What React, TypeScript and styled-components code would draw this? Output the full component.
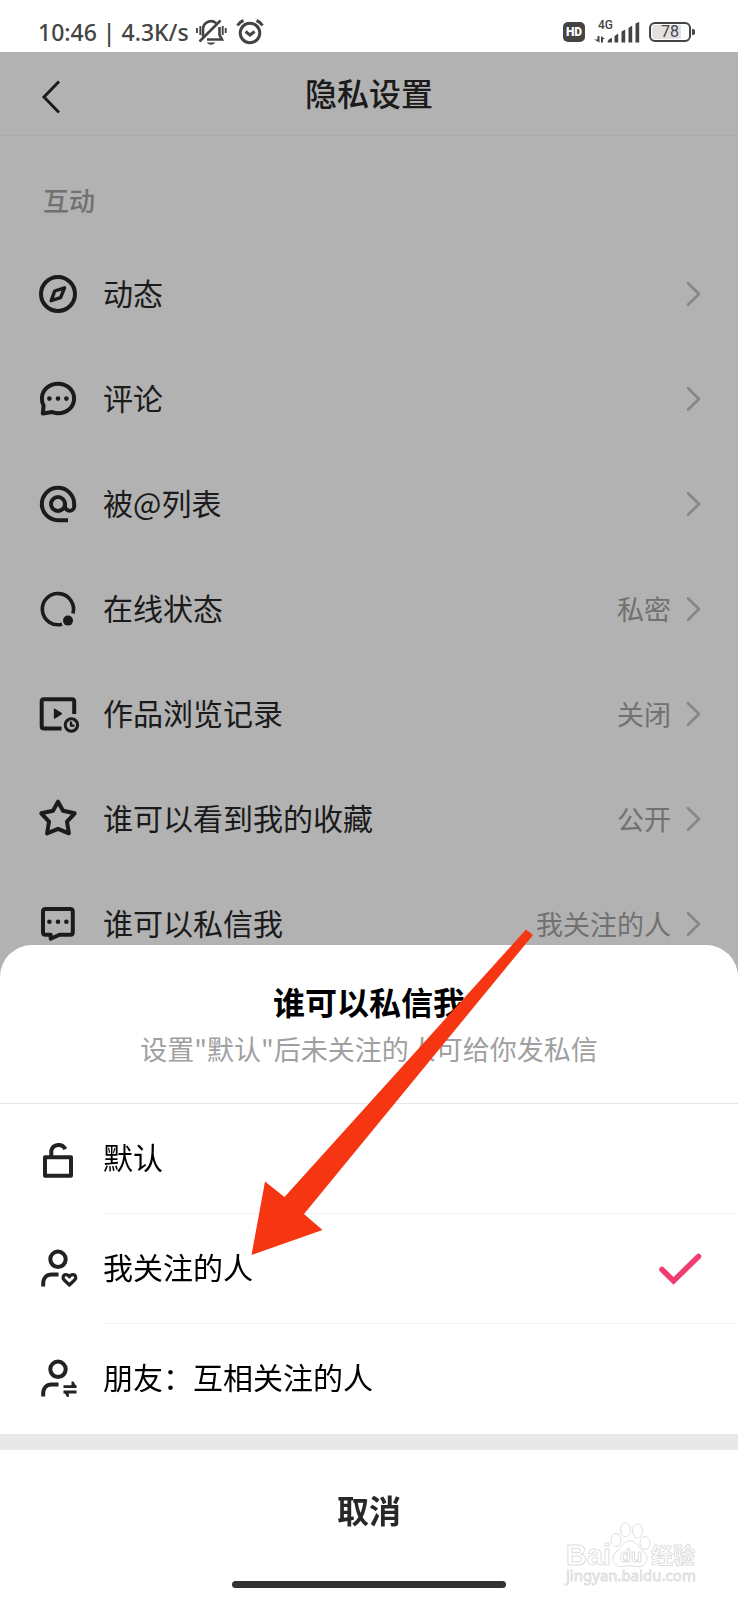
import React, { useState } from "react";
import styled, { createGlobalStyle } from "styled-components";

const ink = "#282828";

const GlobalStyle = createGlobalStyle`
  *, *::before, *::after { box-sizing: border-box; }
  body {
    margin: 0;
    background: #fff;
    font-family: "Noto Sans CJK SC", sans-serif;
    color: ${ink};
  }
  button { font: inherit; color: inherit; background: none; border: 0; padding: 0; cursor: pointer; }
  svg { display: block; flex: none; }
`;

const Page = styled.div`
  display: flex;
  flex-direction: column;
  min-height: 100vh;
`;

const StatusBar = styled.div`
  display: flex;
  align-items: center;
  height: 52px;
  padding: 12px 43px 0 38px;
  background: #fff;
  color: #444;
  font: 500 23px/40px "Noto Sans", sans-serif;
`;

const StatusText = styled.span`
  margin-right: 6px;
  white-space: pre;
`;

const StatusIcons = styled.div`
  display: flex;
  align-items: center;
  gap: 9px;
`;

const StatusRight = styled(StatusIcons)`
  margin-left: auto;
`;

const HdBadge = styled.span`
  width: 22px;
  border-radius: 5px;
  background: #444;
  color: #fff;
  font: 900 12px/20px Roboto, sans-serif;
  text-align: center;
`;

const Signal = styled.div`
  position: relative;
`;

const NetworkLabel = styled.span`
  position: absolute;
  left: 4px;
  top: -1px;
  font: 500 12px/10px Roboto, sans-serif;
`;

const Battery = styled.span`
  position: relative;
  width: 42px;
  border: 2px solid #444;
  border-radius: 6px;
  background: linear-gradient(90deg, #e2e2e2 78%, #fff 78%);
  background-clip: content-box;
  padding: 1px;
  margin-right: 4px;
  font: 400 16px/14px Roboto, sans-serif;
  text-align: center;

  &::after {
    content: "";
    position: absolute;
    right: -6px;
    top: 5px;
    width: 3px;
    height: 6px;
    border-radius: 0 2px 2px 0;
    background: #444;
  }
`;

const Screen = styled.main`
  position: relative;
  flex: 1;
  background: #fff;
`;

const Backdrop = styled.div`
  position: absolute;
  inset: 0;
  background: rgba(0, 0, 0, 0.3);
`;

const Header = styled.header`
  display: grid;
  grid-template-columns: 80px 1fr 80px;
  align-items: center;
  height: 84px;
  border-bottom: 1px solid #f4f4f4;
`;

const BackButton = styled.button`
  padding: 6px 0 0 40px;
`;

const Title = styled.h1`
  margin: 0;
  padding-bottom: 4px;
  font-size: 32px;
  font-weight: 500;
  line-height: 48px;
  text-align: center;
`;

const SectionTitle = styled.h2`
  margin: 0;
  padding: 44px 44px 21px 43px;
  font-size: 26px;
  font-weight: 500;
  line-height: 40px;
  color: #a2a2a2;
`;

const List = styled.ul`
  margin: 0;
  padding: 0;
  list-style: none;
`;

const SettingRow = styled.button`
  display: flex;
  align-items: center;
  width: 100%;
  height: 105px;
  padding: 0 36px;
  text-align: left;
`;

const Label = styled.span`
  flex: 1;
  margin-left: 23px;
  padding-bottom: 3px;
  font-size: 30px;
  line-height: 44px;
`;

const Value = styled.span`
  margin-right: 15px;
  font-size: 27px;
  line-height: 44px;
  color: #a2a2a2;
`;

const Sheet = styled.section`
  position: fixed;
  left: 0;
  right: 0;
  bottom: 0;
  border-radius: 32px 32px 0 0;
  background: #fff;
`;

const SheetHeader = styled.header`
  padding: 32px 24px;
  border-bottom: 1px solid #e6e6e6;
  text-align: center;
`;

const SheetTitle = styled.h2`
  margin: 0;
  font-size: 32px;
  font-weight: 700;
  line-height: 48px;
  color: #000;
`;

const SheetHint = styled.p`
  margin: 0;
  padding-top: 2px;
  font-size: 27px;
  line-height: 44px;
  color: #a0a0a0;
`;

const Options = styled.div`
  display: flex;
  flex-direction: column;
`;

const Option = styled.label`
  display: flex;
  align-items: center;
  height: 110px;
  padding-left: 36px;
  color: #000;
  cursor: pointer;
`;

const OptionBody = styled.span<{ $divider: boolean }>`
  display: flex;
  flex: 1;
  align-items: center;
  height: 110px;
  margin-left: 22px;
  padding: 0 36px 0 1px;
  border-bottom: 1px solid ${(p) => (p.$divider ? "#f3f3f3" : "transparent")};
`;

const OptionText = styled.span`
  flex: 1;
  padding-bottom: 6px;
  font-size: 30px;
  line-height: 44px;
`;

const HiddenRadio = styled.input`
  position: absolute;
  width: 1px;
  height: 1px;
  margin: 0;
  opacity: 0;
`;

const Footer = styled.footer`
  display: flex;
  flex-direction: column;
  align-items: center;
  border-top: 16px solid #e8e8e8;
  padding-bottom: 12px;
`;

const Cancel = styled.button`
  width: 100%;
  padding: 35px 0 48px;
  font-size: 32px;
  font-weight: 700;
  line-height: 48px;
`;

const HomeIndicator = styled.div`
  width: 37%;
  height: 7px;
  border-radius: 4px;
  background: #333;
`;

const Arrow = styled.svg`
  position: absolute;
  left: 250px;
  bottom: 344px;
  pointer-events: none;
`;

const Watermark = styled.svg`
  position: absolute;
  right: 38px;
  bottom: 14px;
  pointer-events: none;
`;

const Icon = ({ children, color = ink }: { children: React.ReactNode; color?: string }) => (
  <svg
    width="44"
    height="44"
    viewBox="0 0 44 44"
    fill="none"
    stroke={color}
    strokeWidth="4"
    strokeLinejoin="round"
    aria-hidden="true"
  >
    {children}
  </svg>
);

const Dots = ({ y }: { y: number }) => (
  <g fill={ink} stroke="none">
    <circle cx="13.4" cy={y} r="2.3" />
    <circle cx="22" cy={y} r="2.3" />
    <circle cx="30.4" cy={y} r="2.3" />
  </g>
);

const CompassIcon = () => (
  <Icon>
    <circle cx="22" cy="22" r="17" />
    <path d="M28.5 15.8 24.6 25.6 15.2 28.7 18.7 19Z" strokeWidth="3.4" />
  </Icon>
);

const CommentIcon = () => (
  <Icon>
    <path d="M6.8 36.400 7.600 28.500C6.300 26.300 5.900 24 5.900 21.600 5.900 13.300 12.800 6.700 22 6.700s16.100 6.500 16.100 14.900S31.200 36.200 22 36.200c-2.200 0-3.600-.4-5.500-1.100Z" />
    <Dots y={21.6} />
  </Icon>
);

const AtIcon = () => (
  <Icon>
    <circle cx="22" cy="22" r="7" />
    <path d="M32 38.200H22A16.200 16.200 0 1 1 38.200 22v2.200a4.600 4.600 0 0 1-9.200 0V22" />
  </Icon>
);

const OnlineIcon = () => (
  <Icon>
    <path d="M26 37.200A15.600 15.600 0 1 1 36.900 26.500" strokeWidth="3.600" />
    <circle cx="32" cy="33.600" r="5" fill={ink} stroke="none" />
  </Icon>
);

const HistoryIcon = () => (
  <Icon>
    <path d="M25.500 36.600H8Q5.700 36.600 5.700 34.300V9.500Q5.700 7.200 8 7.200H36Q38.200 7.200 38.200 9.500V22" />
    <path d="M18.600 17.300 25.400 21.700 18.600 26Z" fill={ink} strokeWidth="1.500" />
    <circle cx="35.400" cy="33" r="6.200" strokeWidth="3" />
    <path d="M35 29.500V33.600H38.500" strokeWidth="2.400" />
  </Icon>
);

const StarIcon = () => (
  <Icon>
    <path d="M22 4.700 27 13.800 38.700 16.300 31 24.700 32.900 36.400 22 31.800 11.100 36.400 13 24.700 5.300 16.300 17 13.800Z" />
  </Icon>
);

const MessageIcon = () => (
  <Icon>
    <path d="M9.500 6.900H34.300Q36.800 6.900 36.800 9.400V30.200Q36.800 32.700 34.300 32.700H23.500L14.700 36.700V32.700H9.500Q7 32.700 7 30.200V9.400Q7 6.900 9.500 6.900Z" />
    <Dots y={19.8} />
  </Icon>
);

const LockIcon = () => (
  <Icon color="#222">
    <rect x="9" y="20.300" width="26" height="18.500" />
    <path d="M15.300 20V13.500A7.500 7.500 0 0 1 29.300 12.200" />
  </Icon>
);

const Person = () => (
  <>
    <circle cx="22" cy="12.300" r="7.700" />
    <path d="M7.200 39.500V37C7.200 31 10.500 27.600 15.500 27.600H22.500" />
  </>
);

const FollowIcon = () => (
  <Icon color="#222">
    <Person />
    <path
      d="M33.400 38 28.200 33C26 30.800 27.200 27.600 29.800 27.600 31.500 27.600 32.600 28.400 33.400 29.800 34.200 28.400 35.300 27.600 37 27.600 39.600 27.600 40.800 30.800 38.600 33Z"
      strokeWidth="3.200"
    />
  </Icon>
);

const FriendIcon = () => (
  <Icon color="#222">
    <Person />
    <path d="M27.500 29.600H40.500M27.500 35H40.500" strokeWidth="2.800" />
    <path d="M35.500 24.500H37.500L40.500 30H35.500ZM28 34.600H32.800V40H31Z" fill="#222" stroke="none" />
  </Icon>
);

const Chevron = () => (
  <svg width="16" height="26" viewBox="0 0 16 26" fill="none" stroke="#c2c2c2" strokeWidth="2.700" aria-hidden="true">
    <path d="M2 2.200 13 13 2 23.800" strokeLinecap="round" strokeLinejoin="round" />
  </svg>
);

const Check = () => (
  <svg width="44" height="34" viewBox="0 0 44 34" fill="none" stroke="#f03c6e" strokeWidth="5.500" aria-hidden="true">
    <path d="M4 17.500 15.500 29 40.500 4.500" strokeLinecap="round" />
  </svg>
);

const MutedBell = () => (
  <svg width="32" height="28" viewBox="0 0 32 28" fill="none" stroke="#444" aria-hidden="true">
    <path d="M8 18.500V11A8 8 0 0 1 21 5M24.500 9V17L27 21.500H12M4.500 23.500 25.500 2.500" strokeWidth="2.600" />
    <path d="M2 10V15M5.300 8V17M27.700 8V17M30.700 10V15" strokeWidth="1.900" />
    <path d="M11.500 24.500H20.500Q16 29 11.500 24.500Z" fill="#444" stroke="none" />
  </svg>
);

const Alarm = () => (
  <svg width="28" height="28" viewBox="0 0 28 28" fill="none" stroke="#444" strokeWidth="3" aria-hidden="true">
    <circle cx="14" cy="15" r="9.800" />
    <path d="M9.500 13.500 14 17 18.500 13.500" />
    <path d="M1.500 7.500Q3.500 4 7.500 2.500M26.500 7.500Q24.500 4 20.500 2.500" />
  </svg>
);

const SignalBars = () => (
  <svg width="46" height="22" viewBox="0 0 46 22" fill="#444" aria-hidden="true">
    <path d="M3.500 15H5.500V21.500L0 18.500H3.500ZM7 15 11 18H9V21.500H7Z" />
    <path d="M13.500 21.500Q14 17.500 18 17V21.500Z" />
    <path d="M20.500 15 24.200 12.500V21.500H20.500ZM27.500 10.500 31.200 8.500V21.500H27.500ZM34.500 7 38.200 4.500V21.500H34.500ZM41.500 2.500 45.200 1V21.500H41.500Z" />
  </svg>
);

const settings = [
  { label: "动态", Glyph: CompassIcon },
  { label: "评论", Glyph: CommentIcon },
  { label: "被@列表", Glyph: AtIcon },
  { label: "在线状态", value: "私密", Glyph: OnlineIcon },
  { label: "作品浏览记录", value: "关闭", Glyph: HistoryIcon },
  { label: "谁可以看到我的收藏", value: "公开", Glyph: StarIcon },
  { label: "谁可以私信我", value: "我关注的人", Glyph: MessageIcon },
];

const options = [
  { label: "默认", Glyph: LockIcon },
  { label: "我关注的人", Glyph: FollowIcon },
  { label: "朋友：互相关注的人", Glyph: FriendIcon },
];

export default function App() {
  const [selected, setSelected] = useState("我关注的人");

  return (
    <Page>
      <GlobalStyle />
      <StatusBar>
        <StatusText>10:46 | 4.3K/s</StatusText>
        <StatusIcons>
          <MutedBell />
          <Alarm />
        </StatusIcons>
        <StatusRight>
          <HdBadge>HD</HdBadge>
          <Signal>
            <NetworkLabel>4G</NetworkLabel>
            <SignalBars />
          </Signal>
          <Battery>78</Battery>
        </StatusRight>
      </StatusBar>

      <Screen>
        <Header>
          <BackButton aria-label="返回">
            <svg width="22" height="34" viewBox="0 0 22 34" fill="none" stroke={ink} strokeWidth="3">
              <path d="M19 1.500 4 17 19 32.500" />
            </svg>
          </BackButton>
          <Title>隐私设置</Title>
        </Header>
        <SectionTitle>互动</SectionTitle>
        <List>
          {settings.map(({ label, value, Glyph }) => (
            <li key={label}>
              <SettingRow>
                <Glyph />
                <Label>{label}</Label>
                {value && <Value>{value}</Value>}
                <Chevron />
              </SettingRow>
            </li>
          ))}
        </List>
        <Backdrop />
      </Screen>

      <Sheet role="dialog" aria-labelledby="sheet-title">
        <SheetHeader>
          <SheetTitle id="sheet-title">谁可以私信我</SheetTitle>
          <SheetHint>设置"默认"后未关注的人可给你发私信</SheetHint>
        </SheetHeader>
        <Options role="radiogroup" aria-labelledby="sheet-title">
          {options.map(({ label, Glyph }, i) => (
            <Option key={label}>
              <HiddenRadio
                type="radio"
                name="who"
                checked={selected === label}
                onChange={() => setSelected(label)}
              />
              <Glyph />
              <OptionBody $divider={i < options.length - 1}>
                <OptionText>{label}</OptionText>
                {selected === label && <Check />}
              </OptionBody>
            </Option>
          ))}
        </Options>
        <Footer>
          <Cancel>取消</Cancel>
          <HomeIndicator />
        </Footer>
        <Watermark width="136" height="68" viewBox="0 0 136 68" fill="#fff" stroke="#dedede" strokeWidth="1">
          <ellipse cx="52" cy="22" rx="5" ry="6.500" />
          <ellipse cx="61.500" cy="12" rx="5" ry="7" />
          <ellipse cx="73.500" cy="13" rx="5" ry="7" />
          <ellipse cx="81" cy="25" rx="5" ry="6.500" />
          <path d="M66 23C73 23 74 29 79 33 86 38 83 48 76 48.500 72 49 69 47.500 66 47.500S60 49 56 48.500C49 48 46 38 53 33 58 29 59 23 66 23Z" />
          <g fontFamily='"Liberation Sans", sans-serif' fontWeight="700">
            <text x="2" y="47" fontSize="29">Bai</text>
            <text x="56" y="44" fontSize="18">du</text>
            <text x="87" y="45" fontSize="22" fontFamily='"Noto Sans CJK SC", sans-serif'>经验</text>
          </g>
          <text x="2" y="63" fontSize="15" fontFamily='"Noto Sans", sans-serif'>jingyan.baidu.com</text>
        </Watermark>
        <Arrow width="284" height="328" viewBox="0 0 284 328" fill="#f63612" aria-hidden="true">
          <path d="M1.500 327 15 253.500 34.500 269 276 1.500 283 7 54 286 72.500 302Z" />
        </Arrow>
      </Sheet>
    </Page>
  );
}
